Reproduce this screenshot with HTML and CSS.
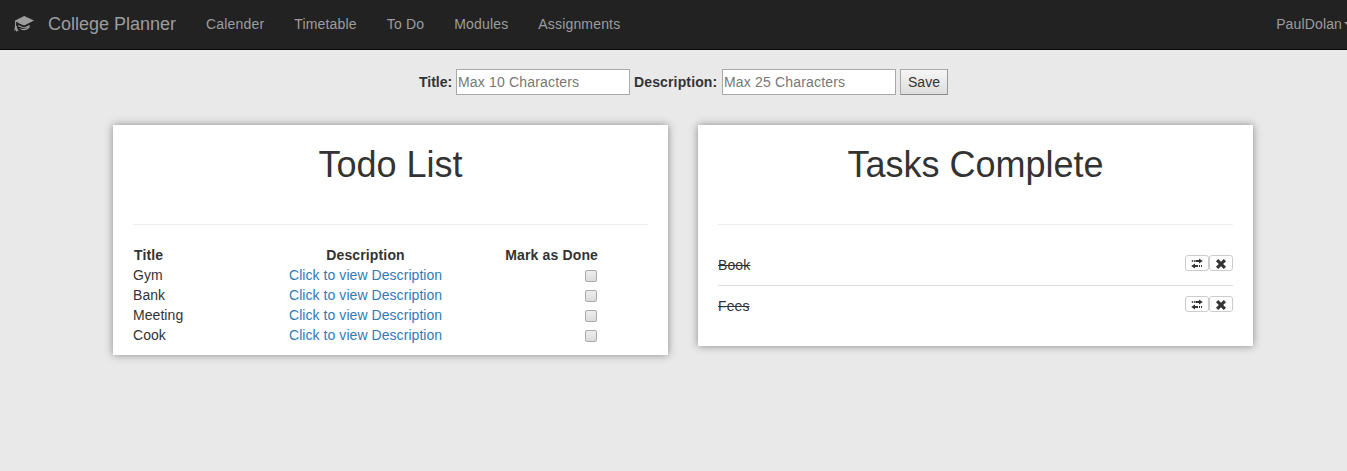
FILE: index.html
```html
<!DOCTYPE html>
<html lang="en">
<head>
<meta charset="utf-8">
<title>College Planner</title>
<link rel="stylesheet" href="styles.css">
</head>
<body>
<nav class="navbar">
  <svg class="logo" viewBox="0 0 20 16" width="20" height="16"><path d="M10.2 0 20 4.6 10 9.4 3.2 6.6 10.3 4.9 9.8 4.4 2.2 6 2 9.6Q3.5 10.6 3 12L4.8 15.3 3 14.8 2.1 16 1.5 13.4.3 15.2 1 9.9 1.1 4.6Z"/><path d="M3 4.4 10.2.4 19 4.6 10 9 4 6.6Z"/><path d="M4.3 9 10 11.4 15.7 9 15.5 11.8Q10 16.6 5.1 12.2Q8 13 10 12.9Q12.5 12.6 13.9 11L10 12.4 4.2 10.2Z"/></svg>
  <a class="brand">College Planner</a>
  <a class="nav-link">Calender</a>
  <a class="nav-link">Timetable</a>
  <a class="nav-link">To Do</a>
  <a class="nav-link">Modules</a>
  <a class="nav-link">Assignments</a>
  <a class="user">PaulDolan<span class="caret"></span></a>
</nav>
<form class="add-form">
  <label for="title">Title:</label>
  <input class="field" id="title" type="text" placeholder="Max 10 Characters">
  <label class="wide-label" for="description">Description:</label>
  <input class="field" id="description" type="text" placeholder="Max 25 Characters">
  <button class="save" type="button">Save</button>
</form>
<main class="cards">
  <section class="card">
    <h1>Todo List</h1>
    <hr>
    <div class="todo-row todo-head"><span>Title</span><span>Description</span><span>Mark as Done</span></div>
    <div class="todo-row"><span>Gym</span><a>Click to view Description</a><input class="check" type="checkbox"></div>
    <div class="todo-row"><span>Bank</span><a>Click to view Description</a><input class="check" type="checkbox"></div>
    <div class="todo-row"><span>Meeting</span><a>Click to view Description</a><input class="check" type="checkbox"></div>
    <div class="todo-row"><span>Cook</span><a>Click to view Description</a><input class="check" type="checkbox"></div>
  </section>
  <section class="card">
    <h1>Tasks Complete</h1>
    <hr>
    <div class="task"><s>Book</s><span class="actions">
      <button class="mini" type="button"><svg width="12" height="10" viewBox="0 0 12 10"><path d="M4.5 1H8V-.4L11.8 2 8 4.4V3H4.5zM7 8H4V9.4L.2 7 4 4.6V6h3z"/><path d="M.8 1h1v2h-1zM2.8 1h1v2h-1zM8 6h1v2H8zM10 6h1v2h-1z"/></svg></button>
      <button class="mini" type="button"><svg width="10" height="10" viewBox="0 0 10 10"><path d="M2.2 0 5 2.8 7.8 0 10 2.2 7.2 5 10 7.8 7.8 10 5 7.2 2.2 10 0 7.8 2.8 5 0 2.2z"/></svg></button></span></div>
    <div class="task"><s>Fees</s><span class="actions">
      <button class="mini" type="button"><svg width="12" height="10" viewBox="0 0 12 10"><path d="M4.5 1H8V-.4L11.8 2 8 4.4V3H4.5zM7 8H4V9.4L.2 7 4 4.6V6h3z"/><path d="M.8 1h1v2h-1zM2.8 1h1v2h-1zM8 6h1v2H8zM10 6h1v2h-1z"/></svg></button>
      <button class="mini" type="button"><svg width="10" height="10" viewBox="0 0 10 10"><path d="M2.2 0 5 2.8 7.8 0 10 2.2 7.2 5 10 7.8 7.8 10 5 7.2 2.2 10 0 7.8 2.8 5 0 2.2z"/></svg></button></span></div>
  </section>
</main>
</body>
</html>
```
FILE: styles.css
```css
* { box-sizing: border-box; }
html { overflow: hidden; }
body { display: flow-root; min-height: 100vh; margin: 0; background: #e9e9e9; color: #333; font: 14px/20px "Liberation Sans", Arial, sans-serif; }
.navbar { display: flex; align-items: center; height: 50px; padding: 0 0 1px 14px; background: #222; border-bottom: 1px solid #080808; color: #9d9d9d; white-space: nowrap; }
.logo { flex: none; margin-right: 14px; fill: #9d9d9d; }
.brand { margin-right: 15px; font-size: 18px; }
.nav-link { padding: 0 15px; letter-spacing: .17px; }
.user { display: flex; align-items: center; flex: none; margin-left: auto; margin-right: -5px; letter-spacing: .14px; }
.caret { margin-left: 2px; border-top: 4px solid; border-left: 4px solid transparent; border-right: 4px solid transparent; }
.add-form { display: flex; justify-content: center; align-items: center; gap: 4px; height: 26px; margin: 19px 0 30px 20px; }
.add-form label { flex: none; width: 33px; font-weight: bold; }
.add-form .wide-label { width: 84px; letter-spacing: .14px; }
.field { width: 174px; height: 26px; padding: 1px; border: 1px solid #a9a9a9; border-radius: 0; background: #fff; font: inherit; letter-spacing: .17px; }
.field::placeholder { color: #777; }
.save { width: 48px; height: 26px; padding: 0; border: 1px solid; border-color: #a9a9a9 #999 #8c8c8c #a9a9a9; background: linear-gradient(#f6f6f6, #ddd); color: #333; font: inherit; }
.cards { display: flex; align-items: flex-start; gap: 30px; margin-left: 113px; }
.card { width: 555px; padding: 20px 20px 10px; background: #fff; box-shadow: 0 0 8px #888; }
h1 { margin: 0 0 39px; font-size: 36px; line-height: 40px; font-weight: 400; text-align: center; }
hr { height: 1px; margin: 0 0 20px; border: 0; background: #eee; }
.todo-row { display: grid; grid-template-columns: 156px 153px 156px; height: 20px; align-items: center; letter-spacing: .06px; }
.todo-row a { color: #337ab7; white-space: nowrap; }
.todo-head { font-weight: bold; letter-spacing: .14px; }
.todo-head span:first-child { padding-left: 1px; }
.todo-head span:nth-child(2) { text-align: center; }
.todo-head span:last-child { text-align: right; }
.check { appearance: none; justify-self: end; width: 12px; height: 12px; margin: 2px 1px 0 0; border: 1px solid #aaa; border-radius: 2px; background: linear-gradient(#eee, #dcdcdc); }
.task { display: flex; justify-content: space-between; align-items: flex-start; height: 40px; padding-top: 10px; }
.task + .task { height: 51px; border-top: 1px solid #ddd; }
.task s { letter-spacing: .1px; }
.actions { display: flex; }
.mini { display: flex; align-items: center; justify-content: center; width: 24px; height: 16px; padding: 1px 0 0; border: 1px solid #ccc; border-radius: 3px; background: #fff; }
.mini svg { overflow: visible; fill: #333; }
```
